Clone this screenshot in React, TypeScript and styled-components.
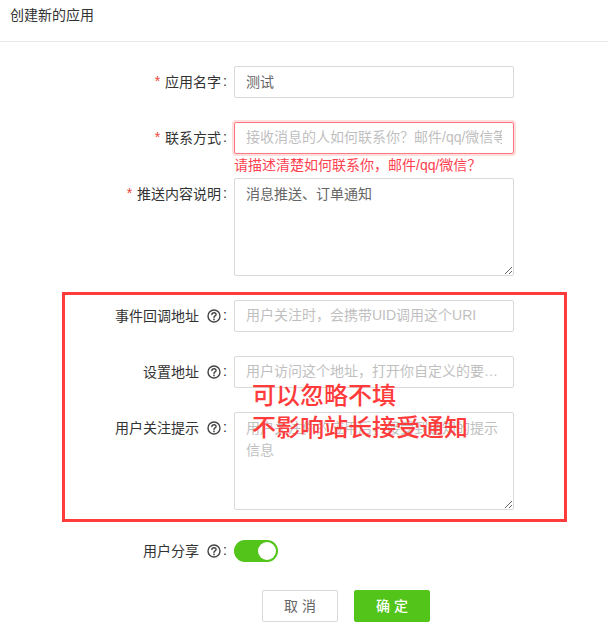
import styled, { createGlobalStyle } from "styled-components"

const GlobalStyle = createGlobalStyle`
  * {
    box-sizing: border-box;
  }
  html, body {
    margin: 0;
    background: #fff;
  }
  body {
    font-family: "Liberation Sans", "Noto Sans CJK SC", sans-serif;
    font-size: 14px;
    color: #333;
  }
`

function HelpIcon() {
  return (
    <svg width="14" height="14" viewBox="0 0 14 14" fill="none" stroke="#444" strokeWidth="1.4">
      <circle cx="7" cy="7" r="6" />
      <path d="M4.900 5.500C4.900 4.400 5.900 3.700 7 3.700s2.100 .7 2.100 1.800c0 1.500-2.100 1.400-2.100 3" strokeLinecap="round" />
      <circle cx="7" cy="10.400" r=".85" fill="#444" stroke="none" />
    </svg>
  )
}

function App() {
  return (
    <Page>
      <GlobalStyle />
      <Header>创建新的应用</Header>
      <Form>
        <Row>
          <Label required>应用名字<Colon>:</Colon></Label>
          <Input defaultValue="测试" />
        </Row>
        <Row>
          <Label required>联系方式<Colon>:</Colon></Label>
          <Control>
            <Input error placeholder="接收消息的人如何联系你？邮件/qq/微信等" />
            <ErrorText>请描述清楚如何联系你，邮件/qq/微信？</ErrorText>
          </Control>
        </Row>
        <Row tight>
          <Label required>推送内容说明<Colon>:</Colon></Label>
          <TextArea defaultValue="消息推送、订单通知" />
        </Row>
        <Row>
          <Label>事件回调地址<Help><HelpIcon /></Help><Colon>:</Colon></Label>
          <Input placeholder="用户关注时，会携带UID调用这个URI" />
        </Row>
        <Row>
          <Label>设置地址<Help><HelpIcon /></Help><Colon>:</Colon></Label>
          <Input placeholder="用户访问这个地址，打开你自定义的要设置的页面" />
        </Row>
        <Row>
          <Label>用户关注提示<Help><HelpIcon /></Help><Colon>:</Colon></Label>
          <TextArea placeholder="用户关注你的应用后，接受到通知的提示信息" />
        </Row>
        <SwitchRow>
          <Label>用户分享<Help><HelpIcon /></Help><Colon>:</Colon></Label>
          <Switch><Knob /></Switch>
        </SwitchRow>
        <Actions>
          <CancelButton>取 消</CancelButton>
          <OkButton>确 定</OkButton>
        </Actions>
      </Form>
      <Highlight />
      <Note>可以忽略不填<br />不影响站长接受通知</Note>
    </Page>
  )
}

const Page = styled.div`
  position: relative;
  width: 608px;
  height: 641px;
  overflow: hidden;
  background: #fff;
`

const Header = styled.div`
  height: 42px;
  padding: 5px 10px 0;
  border-bottom: 1px solid #e9e9e9;
  font-size: 14px;
  line-height: 20px;
  color: #333;
`

const Form = styled.div`
  display: flex;
  flex-direction: column;
  padding-top: 24px;
`

const Row = styled.div<{ tight?: boolean }>`
  display: flex;
  align-items: flex-start;
  margin-bottom: 24px;
  margin-top: ${(p) => (p.tight ? "-24px" : "0")};
`

const Label = styled.label<{ required?: boolean }>`
  display: flex;
  align-items: center;
  justify-content: flex-end;
  width: 234px;
  height: 32px;
  padding: 0 7px 3px 0;
  flex-shrink: 0;
  font-size: 14px;
  color: #333;

  &::before {
    content: ${(p) => (p.required ? '"*"' : "none")};
    margin-right: 5px;
    color: #f04134;
    font-family: "Liberation Sans", sans-serif;
  }
`

const Colon = styled.span`
  margin-left: 2px;
`

const Help = styled.span`
  display: inline-flex;
  margin-left: 8px;
  padding-top: 3px;
`

const Control = styled.div`
  width: 280px;
`

const Input = styled.input<{ error?: boolean }>`
  display: block;
  width: 280px;
  height: 32px;
  padding: 0 11px 3px;
  border: 1px solid ${(p) => (p.error ? "#ff7a7f" : "#d9d9d9")};
  border-radius: 2px;
  box-shadow: ${(p) => (p.error ? "0 0 0 2px rgba(255, 90, 95, 0.2)" : "none")};
  outline: none;
  font: inherit;
  font-size: 14px;
  color: #666;
  text-overflow: ${(p) => (p.error ? "clip" : "ellipsis")};

  &::placeholder {
    color: #bfbfbf;
    opacity: 1;
  }
`

const TextArea = styled.textarea`
  display: block;
  width: 280px;
  height: 98px;
  padding: 4px 11px;
  border: 1px solid #d9d9d9;
  border-radius: 2px;
  outline: none;
  font: inherit;
  font-size: 14px;
  line-height: 22px;
  color: #666;

  &::placeholder {
    color: #bfbfbf;
    opacity: 1;
  }
`

const ErrorText = styled.div`
  height: 24px;
  font-size: 14px;
  line-height: 22px;
  color: #ff4150;
  white-space: nowrap;
`

const SwitchRow = styled.div`
  display: flex;
  align-items: center;
  height: 32px;
  margin-top: 1px;
`

const Switch = styled.div`
  display: flex;
  justify-content: flex-end;
  align-items: center;
  width: 44px;
  height: 22px;
  padding-right: 2px;
  border-radius: 11px;
  background: #52c41a;
`

const Knob = styled.span`
  width: 18px;
  height: 18px;
  border-radius: 50%;
  background: #fff;
`

const Actions = styled.div`
  display: flex;
  gap: 16px;
  padding-left: 262px;
  margin-top: 23px;
`

const CancelButton = styled.button`
  width: 76px;
  height: 32px;
  padding: 0 0 2px;
  border: 1px solid #d9d9d9;
  border-radius: 2px;
  background: #fff;
  font: inherit;
  font-size: 14px;
  color: #666;
`

const OkButton = styled(CancelButton)`
  border-color: #52c41a;
  background: #52c41a;
  color: #fff;
  font-weight: 500;
`

const Highlight = styled.div`
  position: absolute;
  left: 62px;
  top: 292px;
  width: 505px;
  height: 230px;
  border: 3px solid #ff3b3b;
`

const Note = styled.div`
  position: absolute;
  left: 252px;
  top: 380px;
  font-size: 24px;
  font-weight: 500;
  line-height: 32px;
  color: #ff3b3b;
  white-space: nowrap;
`

export default App
